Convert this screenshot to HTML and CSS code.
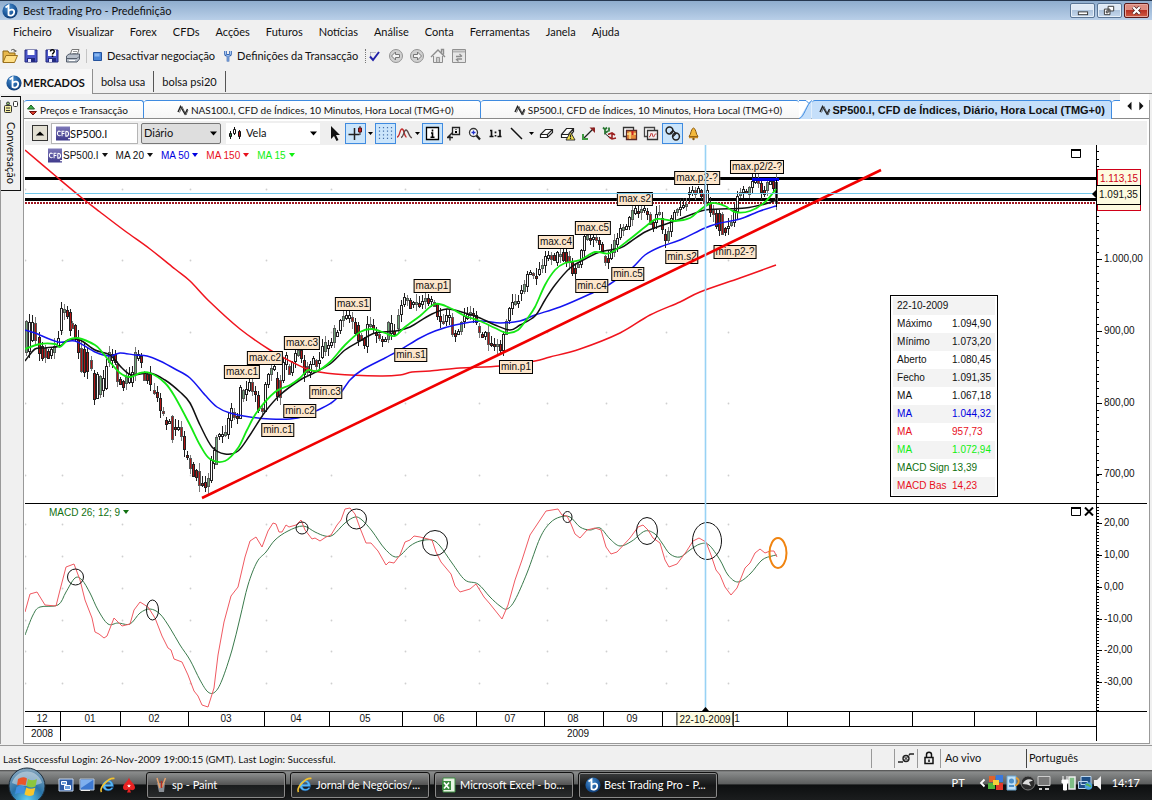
FILE: index.html
```html
<!DOCTYPE html>
<html lang="pt">
<head>
<meta charset="utf-8">
<title>Best Trading Pro - Predefinição</title>
<link rel="stylesheet" href="styles.css">
</head>
<body>
<svg class="defs" aria-hidden="true">
  <defs>
    <radialGradient id="orb" cx=".4" cy=".3" r=".8"><stop offset="0" stop-color="#4a90d0"/><stop offset=".6" stop-color="#1a5598"/><stop offset="1" stop-color="#0d3366"/></radialGradient>
    <radialGradient id="start" cx=".5" cy=".9" r=".9"><stop offset="0" stop-color="#5fd0f4"/><stop offset=".5" stop-color="#2873a8"/><stop offset="1" stop-color="#8aa7bd"/></radialGradient>
    <linearGradient id="cfdg" x2="0" y2="1"><stop offset="0" stop-color="#7d78b8"/><stop offset="1" stop-color="#3f3a8c"/></linearGradient>
    <symbol id="logo" viewBox="0 0 16 16"><circle cx="8" cy="8" r="7.6" fill="url(#orb)"/><path d="M3.500 4.500 6.500 2.500v10M6.500 8C9 5.500 12.400 6.500 12.200 9.400S8.500 13.400 6.500 12" fill="none" stroke="#fff" stroke-width="1.800"/></symbol>
    <symbol id="cfd" viewBox="0 0 15 15"><path fill="url(#cfdg)" d="M0 0h15v15H0z"/><path d="M5 5.500C2 4 1.500 6 1.500 7.500S3 10.500 5 9.500M6.500 10.500V5H9M6.500 7.500H9M10.500 5v5.500c4 0 4-5.500 0-5.500M13 13h2" fill="none" stroke="#fff" stroke-width="1.100"/></symbol>
    <symbol id="wave" viewBox="0 0 12 12"><path d="M1 8 3.500 2.500 8 10l2.500-5" fill="none" stroke="#222" stroke-width="1.400"/><path d="M2.500 8.500 5 2.500l4 8.500 2-5" fill="none" stroke="#444" stroke-width=".8"/></symbol>
    <symbol id="ie" viewBox="0 0 16 16"><path d="M13.500 9.500H5.500c.3 3 4.500 3.300 5.800 1.200h2C11 15.500 2.500 14.500 2.500 8.600c0-6.800 11-7.800 11 .9zM5.500 7.200h5c-.4-3-4.500-3-5 0z" fill="#58b8f6" stroke="#2168b5" stroke-width=".5"/><path d="M1.500 15C-1 11 8 .5 14.500 1.500" fill="none" stroke="#f2c230" stroke-width="1.600"/></symbol>
  </defs>
</svg>

<header class="titlebar">
  <svg class="i16"><use href="#logo"/></svg>
  <h1>Best Trading Pro - Predefinição</h1>
  <div class="winbtns">
    <button aria-label="Minimizar"><svg viewBox="0 0 24 14"><rect x="7.500" y="8.500" width="10" height="3" fill="#fff" stroke="#333"/></svg></button>
    <button aria-label="Restaurar"><svg viewBox="0 0 24 14"><path d="M10.500 2.500h6v5h-6zM6.500 5.500h6v6h-6z" fill="#fff" stroke="#333"/><path d="M8.500 7.500h2v2h-2z" fill="none" stroke="#333"/></svg></button>
    <button class="close" aria-label="Fechar"><svg viewBox="0 0 24 14"><path d="M8.500 3.500l7 7M15.500 3.500l-7 7" stroke="#4c2020" stroke-width="4"/><path d="M8.500 3.500l7 7M15.500 3.500l-7 7" stroke="#fff" stroke-width="2.400"/></svg></button>
  </div>
</header>

<nav class="menubar" aria-label="Menu">
  <button>Ficheiro</button><button>Visualizar</button><button>Forex</button><button>CFDs</button><button>Acções</button><button>Futuros</button><button>Notícias</button><button>Análise</button><button>Conta</button><button>Ferramentas</button><button>Janela</button><button>Ajuda</button>
</nav>

<div class="toolbar">
  <button aria-label="Abrir"><svg class="i16" viewBox="0 0 16 16"><path d="M1 14V3h5l1 2h6v3" fill="#e8b84c" stroke="#8a6414"/><path d="M1 14.500 4 7.500h11.500l-3 7z" fill="#ffdf86" stroke="#9a701c"/><path d="M9 2.500c2-2 4-1 4.500 1M11.500 3h3" fill="none" stroke="#444"/></svg></button>
  <button aria-label="Guardar"><svg class="i16" viewBox="0 0 16 16"><path d="M2 2h12v12H2z" fill="#4a55c8" stroke="#22287c"/><path d="M4.500 2h7v5h-7z" fill="#fff"/><path d="M4 10h8v4H4z" fill="#222a80"/><path d="M5 11h3v3H5z" fill="#e8e8ff"/></svg></button>
  <button aria-label="Guardar como"><svg class="i16" viewBox="0 0 16 16"><path d="M2 2h12v12H2z" fill="#4a55c8" stroke="#22287c"/><path d="M4 2h8v6H4z" fill="#fff"/><path d="M4 10h8v4H4z" fill="#222a80"/><path d="M5 11h3v3H5z" fill="#e8e8ff"/><path d="M6.500 3.500c0-2.500 4-2 3.700 0C10 5 8.500 5 8.500 6.500M8.500 7.500v1.500" fill="none" stroke="#000" stroke-width="1.500"/></svg></button>
  <button aria-label="Imprimir"><svg class="i16" viewBox="0 0 16 16"><path d="M5 7 7 1.500h7L12 7z" fill="#fff" stroke="#777"/><path d="M8 3.500h4M7.500 5.500h4" stroke="#999"/><path d="M1.500 8 4 6h10.500v5L12 14H1.500z" fill="#b7bfca" stroke="#555e6c"/><path d="M2 10.500h10l2-2" fill="none" stroke="#555e6c"/><path d="M4 12.500h6" stroke="#fff"/></svg></button>
  <i class="sep"></i>
  <button class="txt"><svg class="i12" viewBox="0 0 12 12"><path d="M1.500 2.500h8v8h-8z" fill="#4a86d8" stroke="#24529c"/><path d="M2.500 3.500h5v3h-5z" fill="#8bb7f0"/></svg>Desactivar negociação</button>
  <button class="txt"><svg class="i12" viewBox="0 0 12 12"><path d="M3.500 1v3c0 2 5 2 5 0V1M6 5.500v6" fill="none" stroke="#2c5fae" stroke-width="2.600"/><path d="M3.500 1v3c0 2 5 2 5 0V1M6 5.500v5.500" fill="none" stroke="#a8c8f4"/></svg>Definições da Transacção</button>
  <i class="sep dotted"></i>
  <button aria-label="Confirmar" class="narrow"><svg class="i12" viewBox="0 0 12 12"><path d="M1 6.500 4 10l6-8" fill="none" stroke="#2222a8" stroke-width="2"/><path d="M1.500 2.500h6M1.500 2.500v3" stroke="#889" stroke-dasharray="1 1"/></svg></button>
  <button aria-label="Anterior"><svg class="i16" viewBox="0 0 16 16"><circle cx="8" cy="8" r="6.500" fill="#d0d0d0" stroke="#949494"/><path d="M3.500 8 7.500 4v2.500h4v3h-4V12z" fill="#f4f4f4" stroke="#777"/></svg></button>
  <button aria-label="Seguinte"><svg class="i16" viewBox="0 0 16 16"><circle cx="8" cy="8" r="6.500" fill="#d0d0d0" stroke="#949494"/><path d="M12.500 8 8.500 4v2.500h-4v3h4V12z" fill="#f4f4f4" stroke="#777"/></svg></button>
  <button aria-label="Início"><svg class="i16" viewBox="0 0 16 16"><path d="M3.500 8v6.500h9V8" fill="#e8e8e8" stroke="#8c8c8c"/><path d="M1 9 8 2l7 7M11.500 4.500v-3h2v5" fill="none" stroke="#8c8c8c" stroke-width="1.400"/><path d="M6.500 14v-4.500h3V14" fill="#ccc" stroke="#999"/></svg></button>
  <button aria-label="Actualizar"><svg class="i16" viewBox="0 0 16 16"><path d="M1.500 1.500h13v13h-13z" fill="#e6e6e6" stroke="#909090"/><path d="M2 3.500h12" stroke="#b4b4b4" stroke-width="2"/><path d="M5 8.500h5M8.500 6l2.500 2.500M11 11H6M7.500 13.500 5 11" fill="none" stroke="#8c8c8c" stroke-width="1.300"/></svg></button>
</div>

<nav class="spaces" aria-label="Áreas">
  <button class="on"><svg class="i16"><use href="#logo"/></svg>MERCADOS</button><button>bolsa usa</button><button>bolsa psi20</button>
</nav>

<main>
  <aside><button class="chat"><svg viewBox="0 0 16 14"><rect x="1.500" y="5.500" width="7" height="7" rx="1" fill="#f5ee9c" stroke="#333"/><path d="M3 8h4M3 10.500h4" stroke="#333"/><rect x="10.500" y="1.500" width="4" height="5" rx="1" fill="#fff" stroke="#333"/><circle cx="5" cy="3.500" r="1.500" fill="#8bbf6b" stroke="#333"/></svg><span>Conversação</span></button></aside>
  <section class="doc">
    <nav class="tabs" aria-label="Documentos">
      <button class="t1"><svg class="i12" viewBox="0 0 12 12"><path d="M1.500 5 5 1l3.500 4z" fill="#3db34a" stroke="#1d5a24"/><path d="M3.500 7.500h7L7 11z" fill="#d63a2a" stroke="#701410"/></svg>Preços e Transacção</button>
      <button class="t2"><svg class="i12"><use href="#wave"/></svg>NAS100.I, CFD de Índices, 10 Minutos, Hora Local (TMG+0)</button>
      <button class="t3"><svg class="i12"><use href="#wave"/></svg>SP500.I, CFD de Índices, 10 Minutos, Hora Local (TMG+0)</button>
      <svg class="slant" viewBox="0 0 13 19"><path d="M12.500 0v19H0L10 2z" fill="#c5dffa"/><path d="M0 18.500C5 18 8 3 13 .5" fill="none" stroke="#3f8be0"/><path d="M0 .5h7l3 3" fill="none" stroke="#3f8be0"/></svg>
      <button class="t4"><svg class="i12"><use href="#wave"/></svg>SP500.I, CFD de Índices, Diário, Hora Local (TMG+0)</button>
      <i class="stub"></i>
      <div class="arrows"><button aria-label="Separador anterior"><svg viewBox="0 0 10 12"><path d="M8 1v10L3 6z" fill="#111"/></svg></button><button aria-label="Separador seguinte"><svg viewBox="0 0 10 12"><path d="M3 1v10l5-5z" fill="#111"/></svg></button></div>
    </nav>

    <div class="chartbar">
      <button class="up" aria-label="Ocultar"><svg viewBox="0 0 14 13"><path d="M2 9h10L7 4z"/></svg></button>
      <label class="symbol"><svg class="i14"><use href="#cfd"/></svg><input aria-label="Símbolo" value="SP500.I"></label>
      <select class="period" aria-label="Período"><option>Diário</option></select>
      <label class="style"><svg viewBox="0 0 14 14"><path d="M2.500 5v8M6.500 1v8M11.500 4v9" stroke="#111"/><path d="M1.500 7.500h2v3h-2z" fill="#2e8b4a" stroke="#111"/><path d="M5.500 3.500h2v4h-2z" fill="#fff" stroke="#111"/><path d="M10.500 5.500h2v5h-2z" fill="#b21818" stroke="#111"/></svg><select aria-label="Estilo"><option>Vela</option></select></label>
      <button aria-label="Seleccionar"><svg viewBox="0 0 17 17"><path d="M5 1v13l3-3 2.500 5 2-1L10 10h4z" fill="#111"/></svg></button>
      <button class="hot" aria-label="Cursor cruzado"><svg viewBox="0 0 17 17"><path d="M7.500 3v12M1.500 9.500h11" stroke="#222" stroke-width="1.500"/><path d="M13 1v9" stroke="#222"/><path d="M11.500 3h3v4h-3z" fill="#c22" stroke="#511"/></svg></button>
      <button class="dd" aria-label="Mais cursores"><svg viewBox="0 0 7 5"><path d="M1 1h5L3.500 4z"/></svg></button>
      <button class="hot" aria-label="Grelha"><svg viewBox="0 0 17 17"><path d="M2.500 2v14M6.500 2v14M10.500 2v14M14.500 2v14" stroke="#456fa8" stroke-width="1.200" stroke-dasharray="1.200 2.400"/></svg></button>
      <button class="mid" aria-label="Indicadores"><svg viewBox="0 0 17 17"><path d="M1 12C4 12 3.500 4 6 4s2 8 4.500 8" fill="none" stroke="#c22d2d" stroke-width="1.300"/><path d="M5 12.500C8 12 7.500 5 10 5s2.500 7 6 8" fill="none" stroke="#5a4a4a" stroke-width="1.300"/></svg></button>
      <button class="dd" aria-label="Mais indicadores"><svg viewBox="0 0 7 5"><path d="M1 1h5L3.500 4z"/></svg></button>
      <button class="hot" aria-label="Informação"><svg viewBox="0 0 17 17"><path d="M2.500 2.500h12v12h-12z" fill="#fff" stroke="#000" stroke-width="1.300"/><path d="M8.500 4.500v2M7 8h1.500v4M6.500 12.200h4" fill="none" stroke="#000" stroke-width="1.600"/></svg></button>
      <button aria-label="Etiqueta"><svg viewBox="0 0 17 17"><path d="M7.500 2.500h7v7h-7zM7.500 7.500l-5 5M5 9.500v6M2 12.500h6" fill="none" stroke="#222" stroke-width="1.300"/><path d="M10 6h2v2h-2zM10.500 4h1v1h-1z"/></svg></button>
      <button aria-label="Ampliar"><svg viewBox="0 0 17 17"><circle cx="7.500" cy="7.500" r="4" fill="#fff" stroke="#333" stroke-width="1.300"/><path d="M5.500 7.500h4M7.500 5.500v4" stroke="#2233cc" stroke-width="1.300"/><path d="M10.500 10.500 14 14.500" stroke="#222" stroke-width="2.200"/></svg></button>
      <button aria-label="Escala 1:1"><svg viewBox="0 0 17 17"><path d="M3 5.500h1.500V11M13 11V5.500h-1.500M2.500 11.500h4M10.500 11.500h4M8.500 6.500v1.800M8.500 10v1.500" fill="none" stroke="#111" stroke-width="1.700"/></svg></button>
      <button aria-label="Linha"><svg viewBox="0 0 17 17"><path d="M3 3l11 11" stroke="#111" stroke-width="1.500"/></svg></button>
      <button class="dd" aria-label="Mais linhas"><svg viewBox="0 0 7 5"><path d="M1 1h5L3.500 4z"/></svg></button>
      <button aria-label="Apagar"><svg viewBox="0 0 17 17"><path d="M2.500 12.500v-3l5-5h7v3l-5 5zM2.500 9.500h7l5-5M9.500 9.500v3" fill="#fff" stroke="#222" stroke-width="1.200"/></svg></button>
      <button aria-label="Apagar tudo"><svg viewBox="0 0 17 17"><path d="M2.500 12.500v-3l5-6h7v3l-5 6zM2.500 9.500h7l5-6" fill="#fff" stroke="#222" stroke-width="1.200"/><path d="M11.500 7 16 15H7z" fill="#f6e34b" stroke="#333"/><path d="M11.500 9.500v3M11.500 13v1" stroke="#222" stroke-width="1.300"/></svg></button>
      <button aria-label="Medir"><svg viewBox="0 0 17 17"><path d="M4 13 14 3" stroke="#222" stroke-width="1.200"/><path d="M3 9v5h5" fill="none" stroke="#3f9a40" stroke-width="2"/><path d="M9.500 2.500H15V8z" fill="#8c2222"/></svg></button>
      <button aria-label="Ordens"><svg viewBox="0 0 17 17"><path d="M2 2.500l2 2 2-2M4 4v4l3-2M8 2.500v4" fill="none" stroke="#2d7a36" stroke-width="1.800"/><path d="M7 9.500l4-1.500 3 2M8 12l3 2 4-1M11 8v6" fill="none" stroke="#9c2222" stroke-width="1.600"/><path d="M4 8.500 8 12" stroke="#222"/></svg></button>
      <button aria-label="Copiar"><svg viewBox="0 0 17 17"><path d="M1.500 2.500h10v9h-10z" fill="#fff" stroke="#333" stroke-width="1.300"/><path d="M4.500 5.500h10v9h-10z" fill="#e88a3a" stroke="#5a2a2a" stroke-width="1.300"/><path d="M8 7v7M5 9h9" stroke="#f8e08a" stroke-width="1.500"/><path d="M10.500 6v4" stroke="#c22" stroke-width="2"/></svg></button>
      <button aria-label="Modelos"><svg viewBox="0 0 17 17"><path d="M1.500 2.500h10v9h-10z" fill="#fff" stroke="#444" stroke-width="1.300"/><path d="M4.500 5.500h10v9h-10z" fill="#f4f0f0" stroke="#333" stroke-width="1.300"/><path d="M6 12c2 0 1.500-4 2.500-4s1 4 2 4 1-4 3-3" fill="none" stroke="#b33"/></svg></button>
      <button class="hot" aria-label="Ligar"><svg viewBox="0 0 17 17"><circle cx="5.500" cy="5.500" r="3.400" fill="none" stroke="#222" stroke-width="1.500"/><circle cx="12" cy="11.500" r="3.400" fill="none" stroke="#222" stroke-width="1.500"/><path d="M6 8.500 9 5.500l3 3-3 3" fill="none" stroke="#222" stroke-width="1.300"/></svg></button>
      <button aria-label="Alerta"><svg viewBox="0 0 17 17"><path d="M8.500 3C5.500 4 6.500 9 4 11.500h9C10.500 9 11.500 4 8.500 3z" fill="#f4b93c" stroke="#8a5a10"/><path d="M4 12.500h9" stroke="#c88a20" stroke-width="1.500"/><circle cx="8.500" cy="14" r="1.200" fill="#8a5a10"/></svg></button>
    </div>

    <div class="chart" id="chart">
      <svg id="plot" viewBox="25 145 1122 596" preserveAspectRatio="none" role="img" aria-label="SP500.I, gráfico diário com MACD"></svg>
      <div class="legend">
        <svg class="i14"><use href="#cfd"/></svg>
        <button class="s0">SP500.I</button><button>MA 20</button><button class="blue">MA 50</button><button class="red">MA 150</button><button class="lime">MA 15</button>
      </div>
      <div class="legend macd"><button class="green">MACD 26; 12; 9</button></div>
      <div class="panel"><button aria-label="Maximizar preço"><svg viewBox="0 0 10 9"><path d="M.5 1.500h9v7h-9z" fill="#fff" stroke="#000"/><path d="M0 1h10" stroke="#000" stroke-width="2"/></svg></button></div>
      <div class="panel low"><button aria-label="Maximizar MACD"><svg viewBox="0 0 10 9"><path d="M.5 1.500h9v7h-9z" fill="#fff" stroke="#000"/><path d="M0 1h10" stroke="#000" stroke-width="2"/></svg></button><button aria-label="Fechar MACD"><svg viewBox="0 0 10 9"><path d="M1 .5l8 8M9 .5l-8 8" stroke="#000" stroke-width="2"/></svg></button></div>
      <table class="info">
        <tbody>
          <tr><th colspan="2">22-10-2009</th></tr>
          <tr><th>Máximo</th><td>1.094,90</td></tr>
          <tr><th>Mínimo</th><td>1.073,20</td></tr>
          <tr><th>Aberto</th><td>1.080,45</td></tr>
          <tr><th>Fecho</th><td>1.091,35</td></tr>
          <tr><th>MA</th><td>1.067,18</td></tr>
          <tr class="blue"><th>MA</th><td>1.044,32</td></tr>
          <tr class="red"><th>MA</th><td>957,73</td></tr>
          <tr class="lime"><th>MA</th><td>1.072,94</td></tr>
          <tr class="green"><th>MACD Sign</th><td>13,39</td></tr>
          <tr class="red"><th>MACD Bas</th><td>14,23</td></tr>
        </tbody>
      </table>
    </div>
  </section>
</main>

<footer class="status">
  <span class="msg">Last Successful Login: 26-Nov-2009 19:00:15 (GMT). Last Login: Successful.</span>
  <span class="cell"></span>
  <span class="cell"><svg class="i16" viewBox="0 0 16 16"><path d="M0 12h5M11 5l1-1h4" fill="none" stroke="#222" stroke-width="1.500"/><circle cx="8" cy="8.500" r="3" fill="#ddd" stroke="#222" stroke-width="1.400"/><path d="M5.500 11 11 5.500M6.500 7l3 3" stroke="#222"/></svg></span>
  <span class="cell"><svg class="i16" viewBox="0 0 16 16"><path d="M4 7.500h8v6H4z" fill="none" stroke="#111" stroke-width="1.500"/><path d="M5.500 7V4.500c0-3 5-3 5 0V7M8 9.500v2.500" fill="none" stroke="#111" stroke-width="1.500"/></svg></span>
  <span class="cell live">Ao vivo</span>
  <span class="cell lang">Português</span>
</footer>

<footer class="taskbar">
  <button class="start" aria-label="Iniciar"><svg viewBox="0 0 38 38"><circle cx="19" cy="19" r="18" fill="url(#start)" stroke="#1c2c3a"/><path d="M4 16a15.500 15.500 0 0 1 30 0c-8 4-22 4-30 0z" fill="#d5e0e8" opacity=".55"/><path d="M10 12q5-3 9-.5l-1.500 7q-4-2-8.500 0z" fill="#e8552a"/><path d="M20 12q4 2.500 9 0l-1.500 7.500q-5 2-9-.5z" fill="#8cc63e"/><path d="M8.500 20q4.500-2.500 8.500 0l-1.500 7q-4-2-8.500.3z" fill="#3f8fe0"/><path d="M18.300 20.500q4 2.500 9 .3L25.500 28q-5 2-9-.5z" fill="#f8c62c"/></svg></button>
  <div class="quick">
    <button aria-label="Mudar de janela"><svg class="i16" viewBox="0 0 16 16"><path d="M1 2h14v12H1z" fill="#2c5aa4" stroke="#c8d8ee"/><path d="M3.500 4.500h5v3h-5zM6.500 8.500h6v4h-6z" fill="#6f9fdc" stroke="#fff"/></svg></button>
    <button aria-label="Ambiente de trabalho"><svg class="i16" viewBox="0 0 16 16"><path d="M1 2h14v11H1z" fill="#3c78d0" stroke="#b9c6d4"/><path d="M2 3h12L2 11z" fill="#7fb0ee"/><path d="M2 13.500h9" stroke="#eee"/></svg></button>
    <button aria-label="Internet Explorer"><svg class="i16"><use href="#ie"/></svg></button>
    <button aria-label="Póquer"><svg class="i16" viewBox="0 0 16 16"><path d="M8 .5C9 4.500 14 7 14 10.500c0 3-4 3.500-5.300 1.500l1.300 3.500H6L7.300 12C6 14 2 13.500 2 10.500 2 7 7 4.500 8 .5z" fill="#e82222"/><path d="m8 7 .5 1.300H10l-1.100.9.4 1.400L8 9.800l-1.300.8.4-1.400L6 8.300h1.500z" fill="#fff"/></svg></button>
  </div>
  <button class="task"><svg class="i16" viewBox="0 0 16 16"><path d="M4 6h8l-1 9H6z" fill="#8a8f96"/><path d="M4 1l3 10M12.500 1 9 10" stroke="#e7a26c" stroke-width="1.500"/><path d="M8.500 4v7" stroke="#b52c22" stroke-width="1.500"/></svg><span>sp - Paint</span></button>
  <button class="task"><svg class="i16"><use href="#ie"/></svg><span>Jornal de Negócios/...</span></button>
  <button class="task"><svg class="i16" viewBox="0 0 16 16"><path d="M2 1h12v14H2z" fill="#e8f3e4" stroke="#3e8f42"/><path d="M1 4h9v9H1z" fill="#3a8c3e"/><path d="m3 5.500 5 6M8 5.500l-5 6" stroke="#fff" stroke-width="1.700"/></svg><span>Microsoft Excel - bo...</span></button>
  <button class="task on"><svg class="i16"><use href="#logo"/></svg><span>Best Trading Pro - P...</span></button>
  <div class="tray">
    <span class="pt">PT</span>
    <svg class="i12" viewBox="0 0 12 12"><path d="M8.500 2.500 5 6l3.500 3.500" fill="none" stroke="#fff" stroke-width="1.800"/></svg>
    <svg class="i16" viewBox="0 0 16 16"><path d="M1 1h6v6H1z" fill="#e0622c"/><path d="M8 0h7v7H8z" fill="#3a78dc"/><path d="M0 8h7v6H0z" fill="#4fb43c"/><path d="M8 8h7v7H8z" fill="#e2382c"/><path d="M5 5h6v5H5z" fill="#f4d03c"/></svg>
    <svg class="i16" viewBox="0 0 16 16"><path d="M3 1h9v14H3z" fill="#bfe0f6" stroke="#6aa5cf"/><circle cx="7.500" cy="6" r="2.500" fill="#4d8fc8"/><path d="M5 11h5" stroke="#4d8fc8" stroke-width="2"/><path d="M12 3c5 1 2 8-1 7" fill="none" stroke="#e09a30" stroke-width="1.800"/></svg>
    <svg class="i16" viewBox="0 0 16 16"><circle cx="8" cy="8" r="7" fill="#2c2c2c" stroke="#777"/><path d="M2.500 9C5 4 9 3 13 5.500L9 7l2 4-4-1.500z" fill="#ddd"/></svg>
    <svg class="i16" viewBox="0 0 16 16"><path d="M2 1.500h12v9H2z" fill="#777" stroke="#ccc"/><path d="M3 14h3M9 14h4" stroke="#ccc" stroke-width="2"/></svg>
    <svg class="i16 gap" viewBox="0 0 16 16"><path d="M8 2h6v12H8z" fill="#7fbf86" stroke="#eee" stroke-width="1.500"/><path d="M2 1v4M6 1v4M1 5h6v3H5.500v7h-3V8H1z" fill="#fff" stroke="#fff"/></svg>
    <svg class="i16" viewBox="0 0 16 16"><path d="M4 1.500h10v8H4zM1.500 6.500h9v7h-9z" fill="#1e4f86" stroke="#bcd6ee"/><circle cx="11.500" cy="11" r="3.800" fill="#4fa3dc"/><path d="M9 10c2-2 3 2 5 1" fill="none" stroke="#59b84d" stroke-width="1.800"/></svg>
    <svg class="i10" viewBox="0 0 10 16"><path d="M1 5h3l4-4v14l-4-4H1z" fill="#f0f0f0"/></svg>
    <time>14:17</time>
  </div>
</footer>
<script src="chart.js"></script>
</body>
</html>
```
FILE: styles.css
```css
* { box-sizing: border-box; }
body { margin: 0; min-height: 100vh; display: flex; flex-direction: column; overflow-x: hidden; background: #f0f0f0; color: #111; font: 11px/14px Lato, "Liberation Sans", sans-serif; }
button, input, select { font: inherit; color: inherit; margin: 0; padding: 0; border: 0; background: none; border-radius: 0; }
svg { display: block; flex: none; }
.defs { position: absolute; width: 0; height: 0; }
.i16 { width: 16px; height: 16px; }
.i14 { width: 14px; height: 15px; }
.i12 { width: 12px; height: 12px; }
.i10 { width: 10px; height: 16px; }

.titlebar { height: 20px; display: flex; align-items: center; padding: 0 3px 0 2px; border-top: 1px solid #26374f; background: linear-gradient(#8fadce, #b9cfe8); }
.titlebar h1 { margin: 0 0 0 5px; font-size: 11px; font-weight: 400; flex: 1; }
.winbtns { display: flex; gap: 2px; }
.winbtns button { width: 25px; height: 15px; border: 1px solid #5b7696; border-radius: 2px; background: linear-gradient(#dfe9f5 45%, #aec4dd 50%, #c5d8ec); box-shadow: inset 0 0 0 1px #e6eff8; }
.winbtns .close { border-color: #5a1a1a; background: linear-gradient(#dd8c80 45%, #b93224 50%, #cf5c44); box-shadow: inset 0 0 0 1px #e7a79c; }
.winbtns svg { width: 23px; height: 13px; }

.menubar { height: 22px; display: flex; align-items: center; gap: 16px; padding: 2px 13px 0; }
.toolbar { height: 27px; display: flex; align-items: center; padding-left: 2px; }
.toolbar button { width: 21px; display: flex; align-items: center; }
.toolbar .txt { width: auto; gap: 3px; margin-right: 7px; }
.toolbar .narrow { width: 20px; padding-left: 1px; }
.sep { width: 1px; height: 14px; margin: 0 5px 0 0; background: #c4c4c4; }
.sep.dotted { background: none; border-left: 1px dotted #777; margin: 0 2px 0 0; }

.spaces { height: 25px; display: flex; border-bottom: 1px solid #8f8f8f; }
.spaces button { padding: 0 8px 0 8px; margin: 2px 0; border-right: 1px solid #555; height: 21px; }
.spaces .on { display: flex; align-items: center; gap: 1px; margin: 0; padding: 2px 7px 0 6px; height: 25px; background: #f7f7f7; border-color: #8f8f8f; font-weight: 700; }

main { flex: 1; display: flex; padding: 6px 2px 1px 0; border-bottom: 1px solid #999; }
aside { width: 23px; flex: none; border-left: 1px solid #999; }
.chat { width: 20px; height: 95px; margin-top: -4px; padding: 3px 0 0; border: 1px solid #111; border-left: 0; display: flex; flex-direction: column; align-items: center; gap: 8px; line-height: 16px; }
.chat svg { width: 16px; height: 14px; }
.chat span { writing-mode: vertical-rl; }

.doc { flex: 1; min-width: 0; display: flex; flex-direction: column; background: #fff; border: 1px solid #999; border-top: 0; padding: 0 2px 2px 1px; }
.tabs { height: 19px; display: flex; margin: 0 -2px 2px -1px; font-size: 10px; border-bottom: 1px solid #8a8a8a; }
.tabs > button { display: flex; align-items: center; justify-content: center; gap: 2px; border-top: 1px solid #3f8be0; border-right: 1px solid #3f8be0; border-radius: 3px 3px 0 0; white-space: nowrap; min-width: 0; overflow: hidden; background: linear-gradient(#fff, #f6f6f6); }
.tabs .t1 { flex: 120 1 120px; padding-right: 13px; }
.tabs .t2 { flex: 337 1 337px; padding-left: 7px; }
.tabs .t3 { flex: 319 1 319px; padding-left: 16px; border-right: 0; }
.tabs .t4 { flex: 300 1 300px; margin-bottom: -1px; background: #c5dffa; font: bold 11px/14px "Liberation Sans", Arial, sans-serif; }
.slant { width: 13px; height: 19px; margin-bottom: -1px; }
.stub { width: 8px; border-top: 1px solid #3f8be0; border-radius: 3px 0 0 0; }
.arrows { width: 29px; display: flex; align-items: center; justify-content: center; gap: 2px; margin-top: -6px; background: #fff; }
.arrows svg { width: 10px; height: 10px; }

.chartbar { height: 24px; display: flex; align-items: center; padding-left: 7px; background: #efefef; }
.chartbar button { width: 21px; height: 21px; flex: none; display: flex; align-items: center; justify-content: center; }
.chartbar button svg { width: 17px; height: 17px; }
.chartbar .hot { background: #cbe5fb; border: 1px solid #3f8be0; }
.chartbar .dd { width: 9px; }
.chartbar .dd svg { width: 7px; height: 5px; }
.chartbar .mid { width: 17px; }
.chartbar .up { width: 16px; height: 16px; margin-right: 3px; border: 1px solid #333; background: #e2dfd2; }
.chartbar .up svg { width: 12px; height: 11px; }
.symbol { width: 87px; height: 21px; display: flex; align-items: center; margin-right: 3px; padding-left: 4px; border: 1px solid #b5b5b5; background: #fff; }
.symbol input { width: 60px; height: 17px; }
.period { width: 80px; height: 21px; margin-right: 5px; }
.chartbar select { appearance: none; background: url("data:image/svg+xml,%3Csvg xmlns='http://www.w3.org/2000/svg' width='7' height='5'%3E%3Cpath d='M0 .5h7L3.500 4.500z'/%3E%3C/svg%3E") no-repeat right 3px center; }
.chartbar .period { padding-left: 2px; border: 1px solid #777; border-radius: 2px; background-color: #dedede; }
.style { width: 94px; height: 21px; margin-right: 4px; display: flex; align-items: center; gap: 4px; padding-left: 2px; background: #fff; }
.style svg { width: 14px; height: 14px; }
.style select { flex: 1; height: 19px; }

.chart { flex: 1; position: relative; min-height: 400px; font: 10px/12px "Liberation Sans", Arial, sans-serif; }
.chart > svg { position: absolute; inset: 0; width: 100%; height: 100%; pointer-events: none; }
.tag, .num, .mon { position: absolute; white-space: nowrap; line-height: 12px; }
.mon { transform: translate(-50%, -50%); }
.num { transform: translateY(-50%); }
.tag { transform: translate(-50%, -50%); padding: 0 1px; border: 1px solid #000; background: #fde6cb; }
.datebox { padding: 0 2px; line-height: 13px; background: #fdfbe0; border-right: 1px solid #000; border-left: 1px solid #000; }
.price { padding: 3px 2px; border: 1px solid #000; background: #fdfbe0; }
.price.hi { padding: 3px 2px 25px; color: #d00018; border-color: #d00018; }
.legend { position: absolute; left: 23px; top: 3px; display: flex; align-items: center; line-height: 14px; }
.legend.macd { top: 60.500%; left: 24px; }
.legend button { margin-right: 8px; white-space: nowrap; }
.legend .s0 { margin-left: 1px; }
.legend button::after { content: ""; display: inline-block; margin: 0 0 2px 3px; border: 3px solid transparent; border-top: 4px solid; border-bottom: 0; }
.blue { color: #0000e0; } .red { color: #e8101c; } .lime { color: #10f010; } .green { color: #107010; }
.panel { position: absolute; right: 53px; top: 4px; width: 23px; display: flex; gap: 3px; }
.panel.low { top: 60.700%; }
.panel svg { width: 10px; height: 9px; }
.info { position: absolute; left: 77.100%; top: 25.200%; width: 108px; border: 1px solid #000; background: #fff; border-collapse: separate; border-spacing: 0; padding: 1px 2px; }
.info th, .info td { height: 18px; padding: 0 0 0 4px; font-weight: 400; text-align: left; white-space: nowrap; }
.info td { padding: 0; width: 43px; }
.info tr:nth-child(odd) { background: #f3f3f3; }

.status { height: 24px; display: flex; align-items: center; font-size: 10px; }
.status .msg { flex: 1; padding: 2px 0 0 3px; }
.cell { width: 23px; height: 19px; display: flex; align-items: center; justify-content: center; border-left: 1px solid #999; font-size: 11px; }
.live, .lang { justify-content: flex-start; padding-left: 4px; width: 86px; }
.lang { width: 126px; padding-left: 2px; border-color: #444; }

.taskbar { height: 30px; display: flex; align-items: center; gap: 4px; color: #fff; background: linear-gradient(#4a4a4a, #8a8c8c 2px, #5c5e5e 46%, #0d0f10 50%, #1b1d1e); }
.start { width: 54px; height: 30px; overflow: visible; display: flex; justify-content: center; align-items: flex-end; }
.start svg { width: 38px; height: 38px; margin-bottom: -5px; }
.quick { width: 84px; display: flex; gap: 5px; }
.task { width: 140px; height: 27px; display: flex; align-items: center; gap: 3px; padding-left: 6px; border: 1px solid #111; border-radius: 3px; box-shadow: inset 0 0 0 1px #8a8a8a; background: linear-gradient(#8d8f8f, #555 46%, #1a1c1d 50%, #2a2c2d); white-space: nowrap; }
.task.on { background: linear-gradient(#3a3c3d, #151617 50%, #222); }
.tray { flex: 1; display: flex; align-items: center; justify-content: flex-end; padding-right: 12px; height: 26px; margin-top: -4px; }
.pt { margin-right: 11px; }
.tray .gap { margin-left: 9px; }
.tray time { margin-left: 9px; }
```
FILE: chart.js
```js
const NS = 'http://www.w3.org/2000/svg';
const plot = document.getElementById('plot');
const chart = document.getElementById('chart');
const X0 = 25, Y0 = 145, W = 1122, H = 596;
let layer = plot;

function add(name, attrs) {
  const e = document.createElementNS(NS, name);
  for (const k in attrs) e.setAttribute(k, attrs[k]);
  layer.appendChild(e);
  return e;
}
function pairs(s) { return s.split(' ').map(p => p.split(',').map(Number)); }
function smooth(s) {
  const p = pairs(s);
  let d = `M${p[0]}`;
  for (let i = 0; i < p.length - 1; i++) {
    const a = p[i - 1] || p[i], b = p[i], c = p[i + 1], e = p[i + 2] || c;
    d += `C${b[0] + (c[0] - a[0]) / 6} ${b[1] + (c[1] - a[1]) / 6} ${c[0] - (e[0] - b[0]) / 6} ${c[1] - (e[1] - b[1]) / 6} ${c[0]} ${c[1]}`;
  }
  return d;
}
const curve = (s, color, w = 1.5) => add('path', { d: smooth(s), fill: 'none', stroke: color, 'stroke-width': w });
const poly = (s, color) => add('polyline', { points: s, fill: 'none', stroke: color, 'stroke-width': 1 });
const line = (x1, y1, x2, y2, color = '#000', w = 1, extra = {}) =>
  add('line', { x1, y1, x2, y2, stroke: color, 'stroke-width': w, 'shape-rendering': 'crispEdges', ...extra });

function label(cls, x, y, text) {
  const e = document.createElement('span');
  e.className = cls;
  e.textContent = text;
  e.style.left = (x - X0) / W * 100 + '%';
  e.style.top = (y - Y0) / H * 100 + '%';
  chart.appendChild(e);
}

/* grid dots */
for (const x of [25, 62, 122, 190, 266, 331, 405, 479, 547, 606, 666, 728])
  for (const y of [189, 260, 332, 403, 475, 524, 556, 588, 620, 651, 683])
    add('circle', { cx: x + .5, cy: y + .5, r: .9, fill: '#cfcfcf' });

/* levels */
line(25, 178.5, 1096, 178.5, '#000', 3);
line(25, 199.5, 1096, 199.5, '#000', 3);
line(25, 202.5, 1096, 202.5, '#a01822', 2, { 'stroke-dasharray': '2 1' });

/* candles: x,top,bottom */
const candles = pairs('26,321,352 29,322,351 32,322,340 35,323,340 39,337,353 42,346,358 45,348,357 48,351,358 51,349,355 54,346,352 58,338,345 61,308,330 64,309,312 67,310,316 70,312,330 72,323,328 75,325,338 78,338,352 81,348,371 84,349,372 87,352,371 91,360,368 94,373,399 97,374,398 100,376,394 103,378,390 106,366,388 109,352,362 112,354,360 115,354,362 117,364,381 120,379,384 123,381,387 126,377,383 129,374,382 132,372,382 135,352,373 138,354,358 141,356,362 144,373,380 147,374,380 150,374,384 154,390,393 157,392,397 160,398,410 163,411,413 166,420,424 169,421,423 172,416,439 175,427,429 178,427,429 181,427,436 184,436,449 187,455,457 190,458,468 193,464,476 196,470,477 199,471,485 202,483,485 205,482,487 208,478,486 211,460,480 214,450,463 216,437,464 219,434,436 222,434,436 225,432,435 228,418,434 231,408,420 234,412,417 237,416,418 240,387,418 243,390,398 246,389,394 249,382,390 252,382,391 255,391,394 258,395,410 262,408,411 265,384,411 268,374,384 271,368,374 274,366,369 277,378,396 280,380,397 283,362,380 286,355,364 289,366,374 292,362,372 295,353,361 298,350,355 301,350,358 304,360,374 307,366,372 310,364,372 313,358,364 316,360,366 319,360,363 322,346,357 325,342,351 328,345,348 331,342,345 334,328,342 337,332,336 340,320,330 343,316,320 346,315,318 349,315,318 352,317,321 355,322,333 358,325,340 361,335,340 364,338,345 367,324,346 370,324,326 373,325,329 376,332,335 379,334,338 382,339,341 385,339,341 388,322,339 391,323,333 394,331,334 398,315,328 401,305,314 404,297,304 407,298,300 410,300,308 413,302,304 416,302,304 419,303,306 422,301,304 425,298,301 428,298,303 431,299,301 434,302,306 437,304,316 440,316,321 443,321,323 446,315,321 449,315,317 452,317,334 455,333,336 458,331,334 461,322,331 464,316,321 467,314,318 470,312,315 473,313,315 476,315,322 479,326,332 482,334,337 485,332,336 488,332,344 491,343,345 494,344,346 497,344,346 500,344,350 503,334,350 506,321,334 509,308,320 512,302,308 515,301,304 518,301,303 521,290,293 524,284,291 527,274,286 530,272,274 533,273,275 536,276,278 539,269,274 542,265,268 545,256,265 548,255,258 551,255,259 554,255,260 557,252,262 560,254,256 563,252,260 566,252,262 569,256,262 572,262,273 575,268,273 578,264,267 581,250,264 584,236,250 587,235,239 590,238,240 593,237,239 596,237,240 599,240,244 602,244,252 605,256,262 608,258,262 611,251,258 614,240,252 617,238,244 620,228,237 623,227,230 626,226,229 629,217,226 632,210,219 635,208,213 638,211,213 641,209,212 644,208,210 647,211,214 650,214,224 653,222,228 656,214,222 659,212,214 662,218,229 665,234,240 668,231,240 671,218,231 674,212,221 677,209,212 680,207,209 683,205,207 686,204,206 689,192,194 692,190,193 695,190,194 698,188,193 701,190,196 704,193,202 707,190,202 710,203,212 713,210,214 716,213,226 719,213,230 722,214,234 725,228,232 728,226,228 731,222,225 734,210,222 737,196,211 740,192,195 743,189,192 746,191,193 749,187,194 752,181,187 755,179,182 758,180,183 761,183,192 764,190,194 767,182,190 770,181,184 773,181,188 776,182,203');
let prev = 340;
candles.forEach(([x, t, b], i) => {
  const mid = (t + b) / 2, down = mid > prev, up = 1 + (i * 7) % 8, lo = 1 + (i * 11 + 3) % 8;
  prev = mid;
  line(x + .5, t - up, x + .5, b + lo, i % 3 ? '#222' : '#777');
  add('rect', { x: x - .5, y: t + .5, width: 2, height: Math.max(1, b - t), fill: down ? '#b01414' : (i % 3 ? '#fff' : '#6fa87a'), stroke: i % 3 ? '#222' : '#555', 'stroke-width': 1, 'shape-rendering': 'crispEdges' });
});
line(752, 179.5, 779, 179.5, '#0000e8', 3);
line(776.5, 180, 776.5, 207, '#000');

/* moving averages */
curve('25,150 58,178 82,198 100,212 125,231 150,249 175,269 190,281 210,302 240,329 270,350 290,361 310,370 335,374 380,376 400,375 412,372 430,371 460,368 500,366 535,361 550,357 580,349 620,333 650,315 680,302 700,292 740,278 776,265', '#f0141e');
curve('25,330 35,333 58,342 75,341 95,352 110,356 120,353 135,355 147,356 160,361 175,369 190,378 205,395 217,407 230,413 250,417 270,419 290,419 305,416 318,410 335,400 350,380 362,370 385,358 400,350 420,338 435,331 455,325 480,321 500,323 520,321 535,315 560,307 590,294 610,284 632,268 645,255 660,247 680,240 705,228 720,223 740,219 760,211 776,206', '#1414f0');
curve('25,361 35,349 45,348 60,346 68,340 80,340 95,350 110,355 122,368 132,375 150,373 165,380 180,392 190,403 200,425 212,447 225,454 238,451 250,435 265,412 280,395 300,380 312,374 330,364 345,350 360,341 375,333 395,331 410,327 430,315 447,309 465,313 480,318 495,325 510,330 520,325 535,316 545,300 555,285 570,268 585,259 600,252 620,248 630,242 645,232 660,226 675,221 690,215 705,210 720,209 745,208 765,204 776,200', '#111');
curve('25,349 40,344 55,344 60,347 68,340 78,338 95,345 102,352 110,362 120,373 130,377 140,373 150,373 165,383 175,397 190,425 200,445 210,459 225,461 238,448 247,430 257,412 275,392 290,385 300,378 308,370 317,371 330,362 345,345 360,332 372,329 385,333 395,336 405,327 420,316 435,304 450,308 465,316 480,321 495,328 507,333 518,330 527,319 535,307 545,285 555,270 565,263 580,260 595,252 610,253 630,239 645,227 657,219 675,221 690,218 700,210 712,203 725,206 735,212 750,211 765,202 776,189', '#14e814', 1.800);

/* MACD */
curve('25,635 33,615 40,607 58,605 66,592 75,578 82,580 90,593 98,610 108,624 118,623 130,624 140,613 150,609 160,614 170,628 180,645 190,660 200,680 208,692 215,692 222,680 232,650 240,618 248,585 257,562 266,552 275,540 288,531 303,526 315,532 325,536 333,535 345,523 355,517 362,520 372,531 385,549 397,557 410,546 420,541 432,540 440,546 452,563 465,580 478,584 490,597 500,606 507,609 515,600 527,573 540,538 550,523 560,517 570,517 580,527 590,530 600,528 610,539 620,546 632,541 645,531 655,534 662,543 670,554 680,557 690,550 700,544 709,545 720,560 728,575 738,582 750,574 762,560 772,556 777,555', '#3a7a4c', 1);
poly('25,612 30,594 37,592 45,605 56,606 60,590 66,567 74,564 80,580 85,600 92,618 95,632 99,634 104,638 107,636 114,618 122,626 130,624 134,610 140,602 148,607 155,618 162,636 168,648 171,650 174,659 182,662 188,675 194,691 198,696 202,705 208,707 214,688 218,655 224,622 231,596 238,587 245,557 250,541 256,537 262,547 268,531 273,523 276,524 279,532 282,532 286,525 289,527 296,525 301,520 305,530 312,539 315,538 320,541 326,537 331,535 337,525 341,520 345,509 350,508 355,514 360,528 366,543 371,543 378,551 386,565 389,562 394,563 400,555 405,542 410,540 414,536 420,537 432,540 436,552 441,562 451,574 455,586 460,592 470,589 476,584 484,597 490,604 502,619 508,605 515,580 522,560 530,535 540,520 546,511 552,510 558,509 562,515 567,516 571,524 575,534 580,538 587,530 595,528 601,530 606,547 611,554 617,552 630,538 638,527 643,525 648,530 653,538 660,543 665,560 669,567 677,564 686,552 693,541 699,538 706,542 711,555 716,570 720,575 725,587 731,595 737,588 745,568 750,563 755,553 760,549 765,553 770,551 774,551 777,557', '#f05a62');
for (const [cx, cy, rx, ry] of [[75.5, 577, 8, 8], [152.5, 610, 6, 10], [302, 528, 6, 6], [356.5, 519, 10, 10], [435, 543, 12.5, 12.5], [567.5, 517, 4.5, 5.5], [647, 531, 10.5, 13.5], [707, 541, 14.5, 18.5]])
  add('ellipse', { cx, cy, rx, ry, fill: 'none', stroke: '#111' });
add('ellipse', { cx: 778, cy: 553, rx: 8.500, ry: 15, fill: 'none', stroke: '#f08410', 'stroke-width': 2 });

/* axes */
line(25, 503.5, 1147, 503.5);
line(25, 711.5, 1147, 711.5);
line(25, 726.5, 1096, 726.5);
line(1096.5, 145, 1096.5, 741);
line(60.500, 711, 60.500, 741);
for (const x of [120, 188, 264, 329, 402, 476, 544, 603, 662, 733, 787, 849, 912, 974, 1036]) line(x + .5, 711, x + .5, 726);
for (let i = 0; i < 49; i++) line(1096, 151.9 + i * 7.18, 1099, 151.9 + i * 7.18);
for (let i = 0; i < 65; i++) line(1096, 507 + i * 3.18, 1099, 507 + i * 3.18);
for (const [y, t] of [[259, '1.000,00'], [331, '900,00'], [403, '800,00'], [474, '700,00'], [523, '20,00'], [555, '10,00'], [587, '0,00'], [619, '-10,00'], [650, '-20,00'], [682, '-30,00']]) {
  line(1096, y + .5, 1102, y + .5);
  label('num', 1104, y, t);
}
for (const [x, t] of [[42, '12'], [90, '01'], [154, '02'], [226, '03'], [296, '04'], [365, '05'], [439, '06'], [510, '07'], [573, '08'], [632, '09'], [737, '1']]) label('mon', x, 719, t);
label('mon datebox', 705, 719, '22-10-2009');
label('mon', 42, 734, '2008');
label('mon', 578, 734, '2009');
for (const [x, y, t] of [[242, 372, 'max.c1'], [265, 358, 'max.c2'], [302, 343, 'max.c3'], [353, 304, 'max.s1'], [432, 286, 'max.p1'], [556, 242, 'max.c4'], [593, 228, 'max.c5'], [635, 199, 'max.s2'], [697, 178, 'max.p2-?'], [757, 167, 'max.p2/2-?'], [278, 430, 'min.c1'], [300, 411, 'min.c2'], [326, 392, 'min.c3'], [411, 355, 'min.s1'], [516, 367, 'min.p1'], [592, 286, 'min.c4'], [628, 274, 'min.c5'], [682, 257, 'min.s2'], [735, 252, 'min.p2-?']]) label('tag', x, y, t);

/* trend line and crosshair lie over the tags */
layer = plot.cloneNode(false);
layer.removeAttribute('id');
chart.appendChild(layer);
line(202, 498, 881, 170, '#f00000', 2.600, { 'shape-rendering': 'auto' });
line(25, 193.5, 1096, 193.5, '#74c8ea');
line(705.5, 145, 705.5, 711, '#98d2f4', 1.600, { 'shape-rendering': 'auto' });
add('path', { d: 'M702 711l3.500-4 3.500 4z' });
add('path', { d: 'M1096 190v8l-4-4z' });
label('num price hi', 1097, 189.5, '1.113,15');
label('num price', 1096, 194.5, '1.091,35');
```
